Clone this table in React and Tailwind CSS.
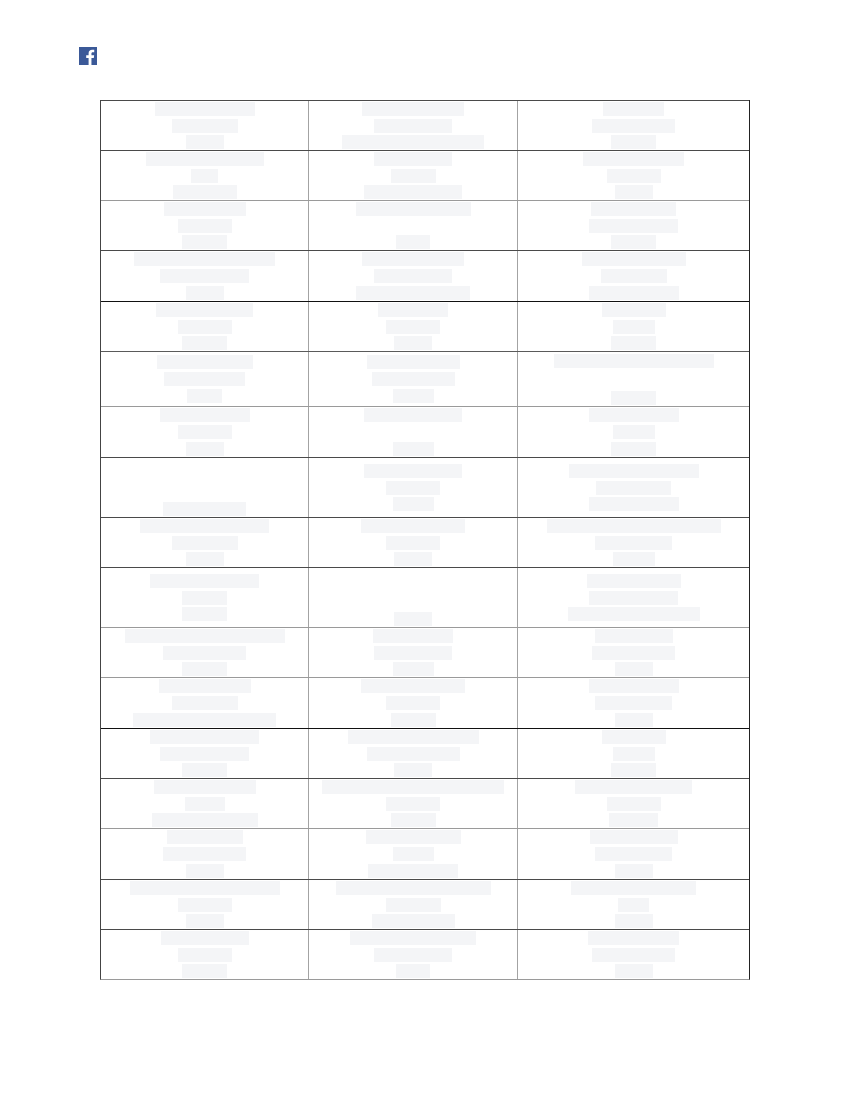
import React from "react";

// widths of the greyed-out text lines, per cell; null = empty line
const rows = [
  { h: "h-[50px]", b: "border-t-[#4a4a4a]", cells: [[100, 66, 38], [102, 78, 142], [61, 83, 45]] },
  { h: "h-[50px]", b: "border-t-[#4a4a4a]", cells: [[118, 27, 64], [78, 45, 98], [101, 54, 38]] },
  { h: "h-[50px]", b: "border-t-[#9a9a9a]", cells: [[82, 54, 45], [115, null, 34], [85, 89, 45]] },
  { h: "h-[51px]", b: "border-t-[#4a4a4a]", cells: [[141, 89, 38], [102, 78, 114], [104, 66, 90]] },
  { h: "h-[50px]", b: "border-t-[#111111]", cells: [[97, 54, 45], [70, 54, 38], [64, 42, 45]] },
  { h: "h-[55px]", b: "border-t-[#5a5a5a]", cells: [[96, 81, 35], [93, 83, 41], { bars: [160, 45], mode: "between" }] },
  { h: "h-[51px]", b: "border-t-[#9a9a9a]", cells: [[90, 54, 38], [98, null, 41], [90, 42, 45]] },
  { h: "h-[60px]", b: "border-t-[#4a4a4a]", cells: [{ bars: [83], mode: "end" }, [98, 54, 41], [130, 75, 90]] },
  { h: "h-[50px]", b: "border-t-[#4a4a4a]", cells: [[129, 66, 38], [104, 54, 38], [174, 77, 42]] },
  { h: "h-[60px]", b: "border-t-[#4a4a4a]", cells: [[109, 45, 45], { bars: [38], mode: "end" }, [94, 89, 132]] },
  { h: "h-[50px]", b: "border-t-[#9a9a9a]", cells: [[160, 83, 45], [80, 78, 41], [78, 83, 38]] },
  { h: "h-[51px]", b: "border-t-[#9a9a9a]", cells: [[92, 66, 143], [104, 54, 45], [90, 77, 38]] },
  { h: "h-[50px]", b: "border-t-[#111111]", cells: [[109, 89, 45], [131, 93, 38], [64, 42, 45]] },
  { h: "h-[50px]", b: "border-t-[#4a4a4a]", cells: [[102, 40, 106], [182, 54, 45], [117, 54, 49]] },
  { h: "h-[51px]", b: "border-t-[#9a9a9a]", cells: [[76, 83, 38], [95, 41, 90], [88, 77, 38]] },
  { h: "h-[50px]", b: "border-t-[#4a4a4a]", cells: [[150, 54, 38], [155, 55, 83], [125, 31, 38]] },
  { h: "h-[50px]", b: "border-t-[#4a4a4a]", cells: [[88, 54, 45], [126, 78, 34], [91, 83, 38]] },
];

function Bar({ w }) {
  if (w === null) return <div className="h-[14px]" />;
  return <div className="h-[14px] bg-[#f4f5f7]" style={{ width: w }} />;
}

function Cell({ data, last }) {
  const bars = Array.isArray(data) ? data : data.bars;
  const mode = Array.isArray(data) ? "center" : data.mode;
  let justify = "justify-center gap-[2.6px]";
  if (mode === "between") justify = "justify-between py-[1.5px]";
  if (mode === "end") justify = "justify-end pb-[1.5px]";

  return (
    <div
      className={`flex flex-col items-center ${justify} ${
        last ? "" : "border-r border-r-[#a3a3a3]"
      }`}
    >
      {bars.map((w, i) => (
        <Bar key={i} w={w} />
      ))}
    </div>
  );
}

function FacebookIcon() {
  return (
    <svg width="18" height="18" viewBox="0 0 24 24" className="block">
      <rect width="24" height="24" fill="#3b5998" />
      <path
        fill="#ffffff"
        d="M16.6 24v-9.3h3.1l.5-3.6h-3.6V8.8c0-1 .3-1.8 1.8-1.8h1.9V3.8c-.3 0-1.5-.1-2.8-.1-2.8 0-4.7 1.7-4.7 4.8v2.6H9.6v3.6h3.2V24z"
      />
    </svg>
  );
}

export default function App() {
  return (
    <div className="min-h-[1100px] w-[850px] bg-white font-['Liberation_Sans',Arial,sans-serif]">
      <div className="pt-[47px] pl-[79px]">
        <FacebookIcon />
      </div>

      <div className="mt-[35px] ml-[100px] w-[650px] border-l border-r border-b border-l-[#444444] border-r-[#222222] border-b-[#9a9a9a]">
        {rows.map((row, i) => (
          <div
            key={i}
            className={`grid grid-cols-[208px_209px_1fr] border-t ${row.h} ${row.b}`}
          >
            {row.cells.map((c, j) => (
              <Cell key={j} data={c} last={j === 2} />
            ))}
          </div>
        ))}
      </div>
    </div>
  );
}
